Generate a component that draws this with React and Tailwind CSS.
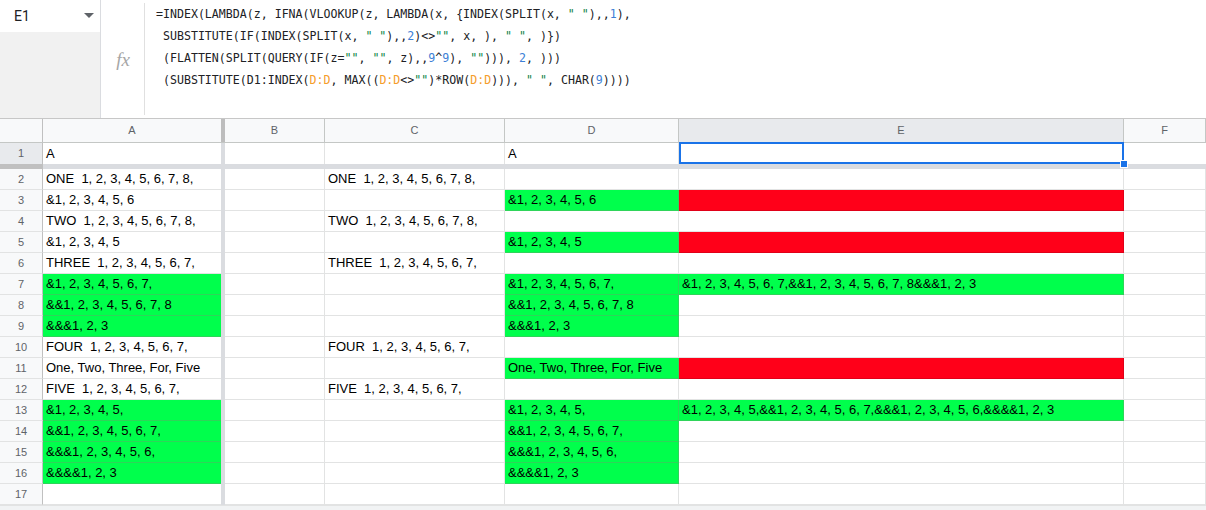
import React from "react"

const G = "#0b8043"
const B = "#3d7fd6"
const O = "#f59d2a"

// formula tokens: [text, color]
const lines = [
  [["=INDEX(LAMBDA(z, IFNA(VLOOKUP(z, LAMBDA(x, {INDEX(SPLIT(x, "], ['" "', G], ["),,"], ["1", B], ["),"]],
  [[" SUBSTITUTE(IF(INDEX(SPLIT(x, "], ['" "', G], ["),,"], ["2", B], [")<>"], ['""', G], [", x, ), "], ['" "', G], [", )})"]],
  [[" (FLATTEN(SPLIT(QUERY(IF(z="], ['""', G], [", "], ['""', G], [", z),,"], ["9", B], ["^"], ["9", B], ["), "], ['""', G], ["))), "], ["2", B], [", )))"]],
  [[" (SUBSTITUTE(D1:INDEX("], ["D:D", O], [", MAX(("], ["D:D", O], ["<>"], ['""', G], [")*ROW("], ["D:D", O], ["))), "], ['" "', G], [", CHAR("], ["9", B], ["))))"]],
]

const GREEN = "g"
const RED = "r"

// rows 2..17: [A, C, D, E] where each is text or [text, fill]
const rows = [
  ["ONE  1, 2, 3, 4, 5, 6, 7, 8,", "ONE  1, 2, 3, 4, 5, 6, 7, 8,", "", ""],
  ["&1, 2, 3, 4, 5, 6", "", ["&1, 2, 3, 4, 5, 6", GREEN], ["", RED]],
  ["TWO  1, 2, 3, 4, 5, 6, 7, 8,", "TWO  1, 2, 3, 4, 5, 6, 7, 8,", "", ""],
  ["&1, 2, 3, 4, 5", "", ["&1, 2, 3, 4, 5", GREEN], ["", RED]],
  ["THREE  1, 2, 3, 4, 5, 6, 7,", "THREE  1, 2, 3, 4, 5, 6, 7,", "", ""],
  [["&1, 2, 3, 4, 5, 6, 7,", GREEN], "", ["&1, 2, 3, 4, 5, 6, 7,", GREEN], ["&1, 2, 3, 4, 5, 6, 7,&&1, 2, 3, 4, 5, 6, 7, 8&&&1, 2, 3", GREEN]],
  [["&&1, 2, 3, 4, 5, 6, 7, 8", GREEN], "", ["&&1, 2, 3, 4, 5, 6, 7, 8", GREEN], ""],
  [["&&&1, 2, 3", GREEN], "", ["&&&1, 2, 3", GREEN], ""],
  ["FOUR  1, 2, 3, 4, 5, 6, 7,", "FOUR  1, 2, 3, 4, 5, 6, 7,", "", ""],
  ["One, Two, Three, For, Five", "", ["One, Two, Three, For, Five", GREEN], ["", RED]],
  ["FIVE  1, 2, 3, 4, 5, 6, 7,", "FIVE  1, 2, 3, 4, 5, 6, 7,", "", ""],
  [["&1, 2, 3, 4, 5,", GREEN], "", ["&1, 2, 3, 4, 5,", GREEN], ["&1, 2, 3, 4, 5,&&1, 2, 3, 4, 5, 6, 7,&&&1, 2, 3, 4, 5, 6,&&&&1, 2, 3", GREEN]],
  [["&&1, 2, 3, 4, 5, 6, 7,", GREEN], "", ["&&1, 2, 3, 4, 5, 6, 7,", GREEN], ""],
  [["&&&1, 2, 3, 4, 5, 6,", GREEN], "", ["&&&1, 2, 3, 4, 5, 6,", GREEN], ""],
  [["&&&&1, 2, 3", GREEN], "", ["&&&&1, 2, 3", GREEN], ""],
  ["", "", "", ""],
]

function Cell({ v, w }) {
  const [text, fill] = Array.isArray(v) ? v : [v, null]
  const bg =
    fill === GREEN
      ? "bg-[#00ff4c] border-[#2fd45a]"
      : fill === RED
      ? "bg-[#ff0019] border-[#e00018]"
      : "bg-white border-[#e2e3e3]"
  return (
    <div className={`${w} ${bg} h-full shrink-0 border-r border-b px-[3px] flex items-center overflow-hidden whitespace-pre text-[13px] text-black`}>
      {text}
    </div>
  )
}

function RowNum({ n, selected }) {
  return (
    <div className={`w-[43px] h-full shrink-0 border-r border-r-[#c0c0c0] border-b border-b-[#e2e3e3] flex items-center justify-center text-[11px] text-[#5f6368] ${selected ? "bg-[#e8eaed]" : "bg-[#f8f9fa]"}`}>
      {n}
    </div>
  )
}

function ColHead({ label, w, selected }) {
  return (
    <div className={`${w} h-full shrink-0 border-r border-[#c4c7c5] flex items-center justify-center text-[11px] text-[#5f6368] ${selected ? "bg-[#e8eaed]" : "bg-[#f8f9fa]"}`}>
      {label}
    </div>
  )
}

export default function App() {
  return (
    <div className="w-[1206px] h-[510px] overflow-hidden bg-white font-['Liberation_Sans',Arial,sans-serif]">
      {/* formula bar */}
      <div className="h-[119px] flex border-b border-[#c7c7c7]">
        <div className="w-[101px] shrink-0 border-r border-[#dadce0] flex flex-col">
          <div className="h-[32px] bg-white flex items-center justify-between pl-[14px] pr-[6px]">
            <span className="text-[14px] text-[#202124] font-['Roboto',sans-serif]">E1</span>
            <svg width="10" height="6" viewBox="0 0 10 6"><path d="M0 0h10L5 5z" fill="#5f6368" /></svg>
          </div>
          <div className="flex-1 bg-[#f1f1f1]" />
        </div>
        <div className="w-[43px] shrink-0 flex items-center justify-center pl-[1px]">
          <span className="font-['Liberation_Serif',serif] italic text-[19px] text-[#a6a6a6] mt-[2px]">fx</span>
        </div>
        <div className="w-px bg-[#e0e0e0] my-[3px]" />
        <div className="flex-1 pl-[11px] pt-[3px] font-['DejaVu_Sans_Mono',monospace] text-[11.6px] leading-[22px] text-[#202124] whitespace-pre">
          {lines.map((ln, i) => (
            <div key={i}>
              {ln.map(([t, c], j) => (
                <span key={j} style={c ? { color: c } : undefined}>{t}</span>
              ))}
            </div>
          ))}
        </div>
      </div>

      {/* column headers */}
      <div className="h-[24px] flex border-b border-[#c4c7c5]">
        <div className="w-[43px] shrink-0 border-r border-[#c0c0c0] bg-[#f8f9fa]" />
        <ColHead label="A" w="w-[178px] border-r-0" />
        <div className="w-[4px] shrink-0 bg-[#bdbdbd]" />
        <ColHead label="B" w="w-[100px]" />
        <ColHead label="C" w="w-[180px]" />
        <ColHead label="D" w="w-[174px]" />
        <ColHead label="E" w="w-[445px]" selected />
        <ColHead label="F" w="flex-1" />
      </div>

      {/* row 1 (frozen) */}
      <div className="h-[21px] flex relative">
        <div className="w-[43px] h-full shrink-0 border-r border-[#c0c0c0] bg-[#e8eaed] flex items-center justify-center text-[11px] text-[#5f6368]">1</div>
        <div className="w-[178px] h-full shrink-0 px-[3px] flex items-center text-[13px] text-black">A</div>
        <div className="w-[4px] shrink-0 bg-[#dadce0]" />
        <div className="w-[100px] h-full shrink-0 border-r border-[#e2e3e3]" />
        <div className="w-[180px] h-full shrink-0 border-r border-[#e2e3e3]" />
        <div className="w-[174px] h-full shrink-0 border-r border-[#e2e3e3] px-[3px] flex items-center text-[13px] text-black">A</div>
        <div className="w-[445px] h-full shrink-0 relative">
          <div className="absolute inset-0 -top-px border-2 border-[#1a73e8]" />
          <div className="absolute right-[-4px] bottom-[-4px] w-[8px] h-[8px] bg-[#1a73e8] border border-white" />
        </div>
        <div className="flex-1" />
      </div>

      {/* frozen row divider */}
      <div className="h-[5px] flex">
        <div className="w-[43px] shrink-0 bg-[#c0c0c0]" />
        <div className="flex-1 bg-[#dadce0]" />
      </div>

      {rows.map((r, i) => (
        <div key={i} className="h-[21px] flex">
          <RowNum n={i + 2} />
          <Cell v={r[0]} w="w-[178px] border-r-0" />
          <div className="w-[4px] shrink-0 bg-[#dadce0]" />
          <Cell v="" w="w-[100px]" />
          <Cell v={r[1]} w="w-[180px]" />
          <Cell v={r[2]} w="w-[174px]" />
          <Cell v={r[3]} w="w-[445px]" />
          <Cell v="" w="flex-1" />
        </div>
      ))}

      <div className="h-[10px] bg-[#f1f3f4] border-t border-[#e2e3e3]" />
    </div>
  )
}
